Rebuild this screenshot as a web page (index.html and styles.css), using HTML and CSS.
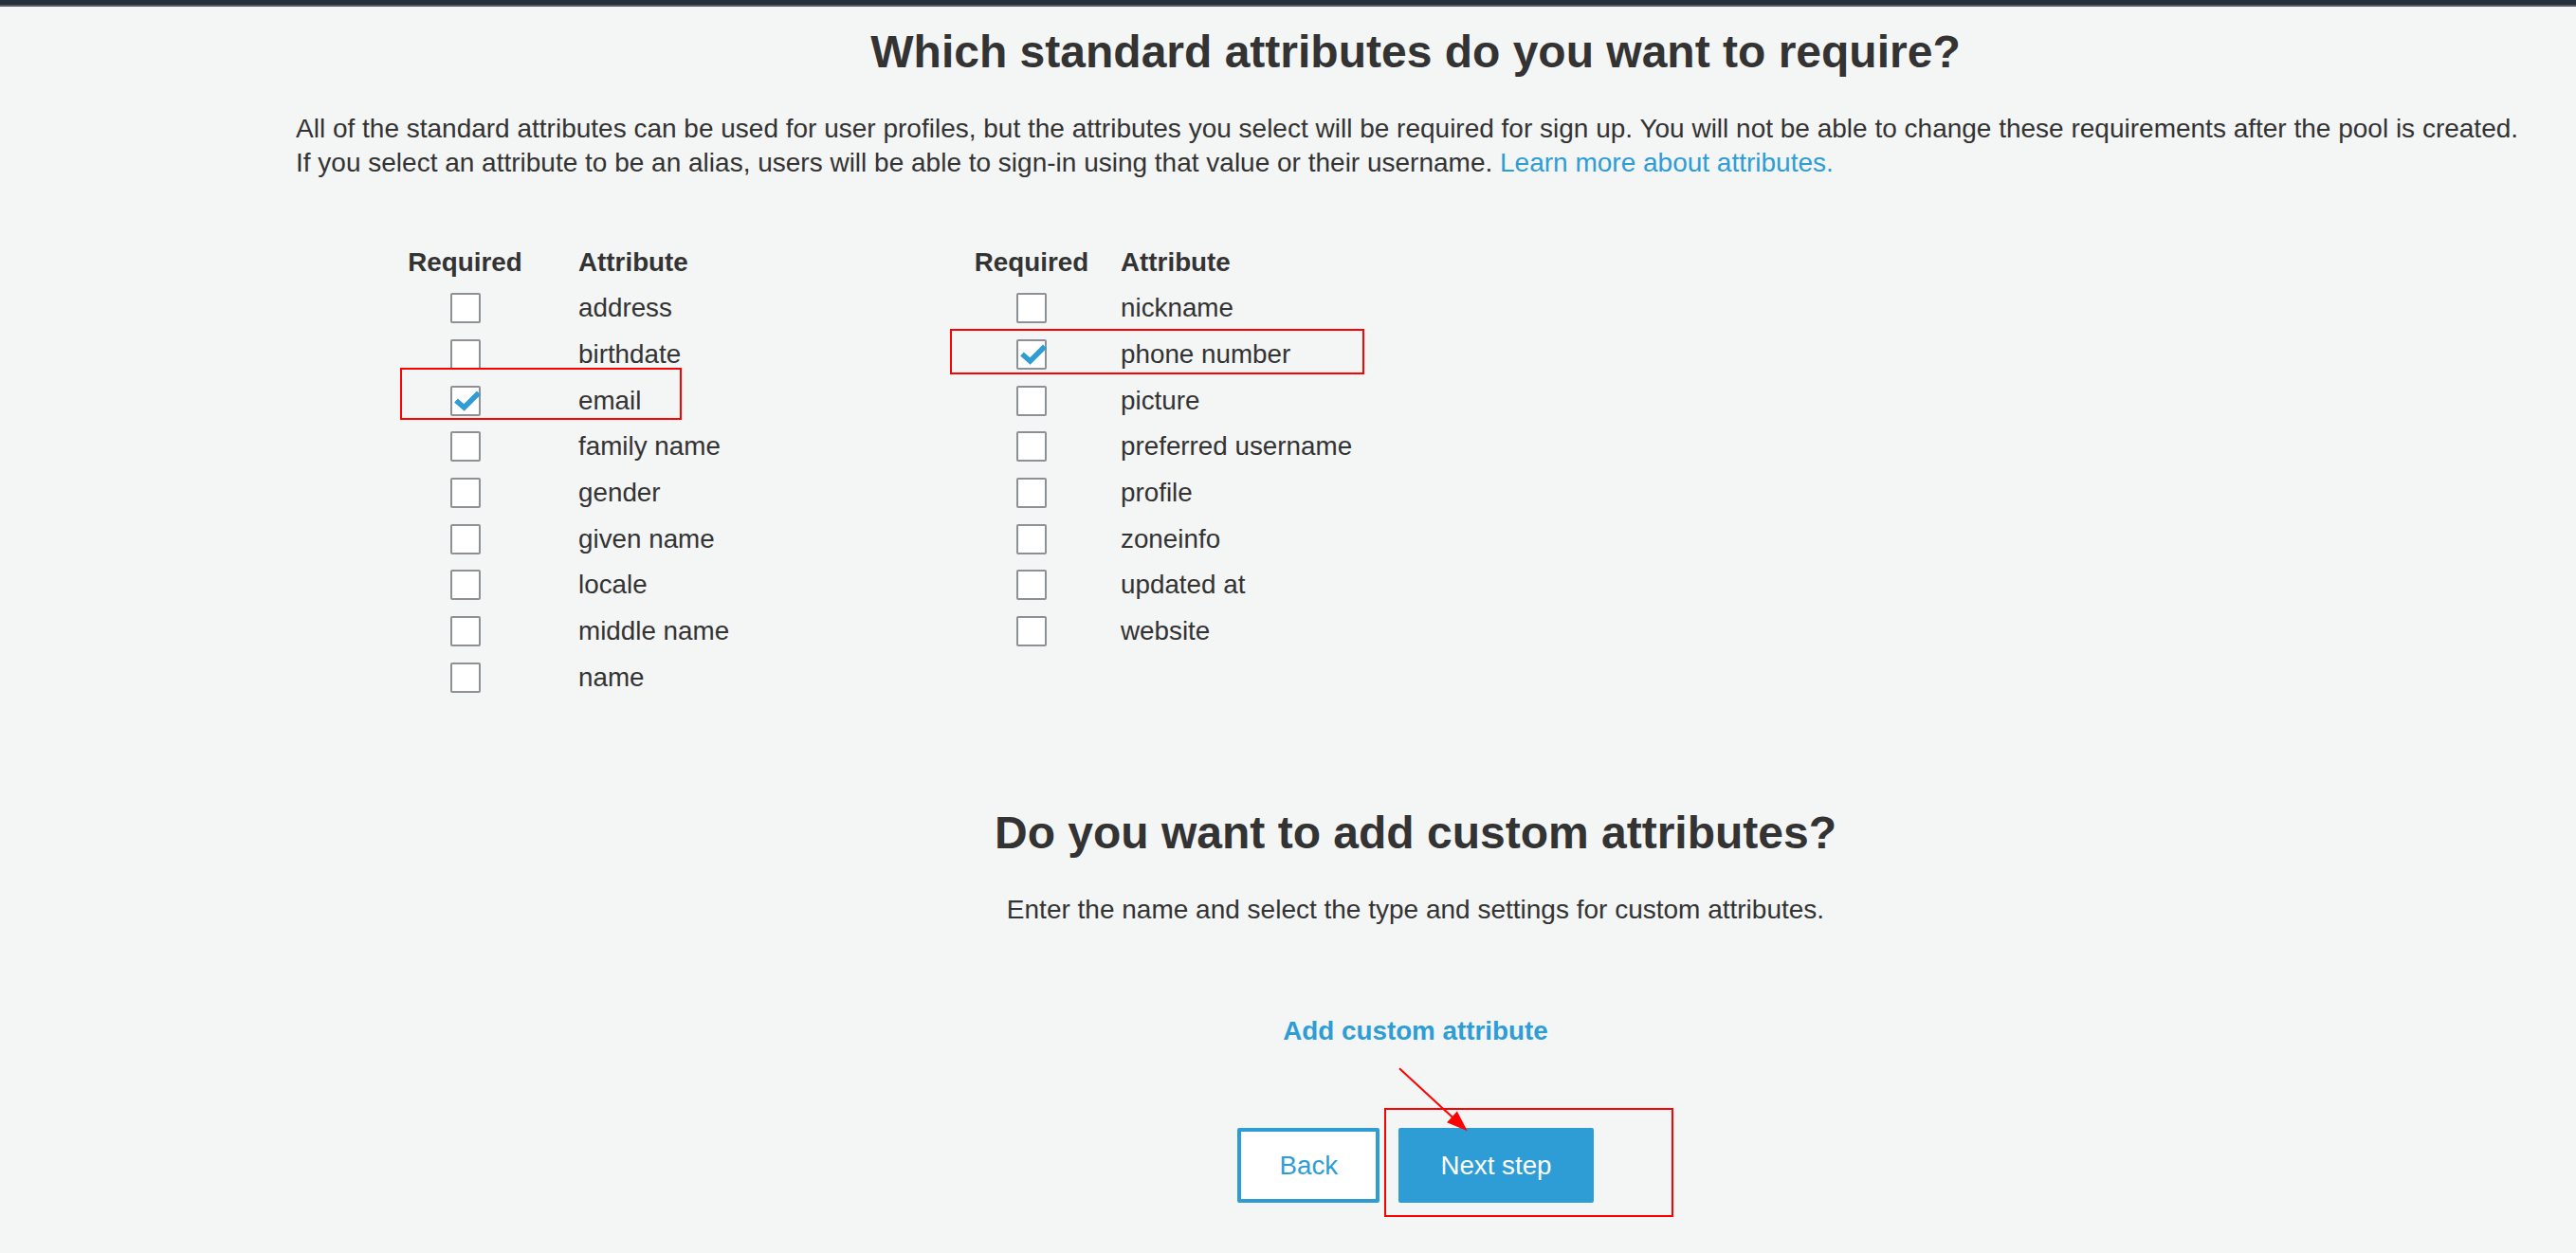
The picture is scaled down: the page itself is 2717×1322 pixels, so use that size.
FILE: index.html
```html
<!DOCTYPE html>
<html lang="en">
<head>
<meta charset="utf-8">
<title>Attributes</title>
<link rel="stylesheet" href="styles.css">
</head>
<body>
<div class="topbar"></div>
<main class="wizard">
  <section class="standard">
    <h1 class="title">Which standard attributes do you want to require?</h1>
    <p class="intro">All of the standard attributes can be used for user profiles, but the attributes you select will be required for sign up. You will not be able to change these requirements after the pool is created.<br>If you select an attribute to be an alias, users will be able to sign-in using that value or their username. <a class="link" href="#">Learn more about attributes.</a></p>
    <div class="tables">
      <div class="attr-table left">
        <div class="th req">Required</div><div class="th">Attribute</div>
        <div class="cb-cell"><span class="cb"></span></div><div class="name">address</div>
        <div class="cb-cell"><span class="cb"></span></div><div class="name">birthdate</div>
        <div class="cb-cell"><span class="cb checked"><svg viewBox="0 0 32 32"><polyline points="6,15.5 14.5,23 30,7.5"/></svg></span></div><div class="name">email</div>
        <div class="cb-cell"><span class="cb"></span></div><div class="name">family name</div>
        <div class="cb-cell"><span class="cb"></span></div><div class="name">gender</div>
        <div class="cb-cell"><span class="cb"></span></div><div class="name">given name</div>
        <div class="cb-cell"><span class="cb"></span></div><div class="name">locale</div>
        <div class="cb-cell"><span class="cb"></span></div><div class="name">middle name</div>
        <div class="cb-cell"><span class="cb"></span></div><div class="name">name</div>
      </div>
      <div class="attr-table right">
        <div class="th req">Required</div><div class="th">Attribute</div>
        <div class="cb-cell"><span class="cb"></span></div><div class="name">nickname</div>
        <div class="cb-cell"><span class="cb checked"><svg viewBox="0 0 32 32"><polyline points="6,15.5 14.5,23 30,7.5"/></svg></span></div><div class="name">phone number</div>
        <div class="cb-cell"><span class="cb"></span></div><div class="name">picture</div>
        <div class="cb-cell"><span class="cb"></span></div><div class="name">preferred username</div>
        <div class="cb-cell"><span class="cb"></span></div><div class="name">profile</div>
        <div class="cb-cell"><span class="cb"></span></div><div class="name">zoneinfo</div>
        <div class="cb-cell"><span class="cb"></span></div><div class="name">updated at</div>
        <div class="cb-cell"><span class="cb"></span></div><div class="name">website</div>
      </div>
    </div>
  </section>
  <section class="custom">
    <h2 class="title second">Do you want to add custom attributes?</h2>
    <p class="intro centered">Enter the name and select the type and settings for custom attributes.</p>
    <a class="add-link" href="#">Add custom attribute</a>
    <div class="actions">
      <button class="btn back" type="button">Back</button>
      <button class="btn next" type="button">Next step</button>
    </div>
  </section>
</main>
<div class="mark mark-email"></div>
<div class="mark mark-phone"></div>
<div class="mark mark-next"></div>
<svg class="arrow" viewBox="0 0 90 80" width="90" height="80"><line x1="6" y1="7.3" x2="62" y2="58.8"/><polygon points="77.7,73.3 56.1,64.3 66.9,52.5"/></svg>
</body>
</html>
```
FILE: styles.css
```css
html, body {
  margin: 0;
  padding: 0;
}
body {
  background: #f4f5f5;
  color: #333333;
  font-family: "Liberation Sans", Arial, sans-serif;
  font-size: 27.8px;
  min-height: 1322px;
  position: relative;
}
.topbar {
  height: 5px;
  background: #232f3e;
  border-bottom: 2px solid #545b64;
}
.wizard {
  padding: 0 43px 0 312px;
}
.title {
  margin: 20px 0 0;
  font-size: 48px;
  line-height: 56px;
  font-weight: bold;
  text-align: center;
  color: #333333;
}
.title.second {
  margin-top: 112px;
}
.intro {
  margin: 35px 0 0;
  font-size: 28px;
  line-height: 36.4px;
}
.intro.centered {
  margin-top: 35px;
  text-align: center;
}
.link {
  color: #2e9dd6;
  text-decoration: none;
}
.tables {
  display: flex;
  margin-top: 61.5px;
  padding-left: 118px;
}
.attr-table {
  display: grid;
  grid-auto-rows: 48.7px;
  align-items: center;
}
.attr-table.left {
  grid-template-columns: 121px auto;
  column-gap: 59px;
  width: 597.5px;
}
.attr-table.right {
  grid-template-columns: 121px auto;
  column-gap: 33.5px;
}
.th {
  font-weight: bold;
  white-space: nowrap;
}
.th.req {
  text-align: center;
}
.cb-cell {
  display: flex;
  justify-content: center;
  align-items: center;
}
.cb {
  box-sizing: border-box;
  width: 32px;
  height: 32px;
  border: 2px solid #8c9196;
  border-radius: 2px;
  background: #ffffff;
  position: relative;
  display: block;
}
.cb svg {
  position: absolute;
  left: -2px;
  top: -2px;
  width: 32px;
  height: 32px;
  overflow: visible;
}
.cb svg polyline {
  fill: none;
  stroke: #2e9dd6;
  stroke-width: 5.6;
  stroke-linejoin: miter;
}
.name {
  white-space: nowrap;
}
.custom {
  display: flex;
  flex-direction: column;
  align-items: center;
}
.custom .title, .custom .intro {
  align-self: stretch;
}
.add-link {
  margin-top: 90px;
  font-weight: bold;
  line-height: 38.8px;
  color: #2e9dd6;
  text-decoration: none;
}
.actions {
  margin-top: 82.5px;
  display: flex;
  gap: 20.3px;
}
.btn {
  box-sizing: border-box;
  height: 79.4px;
  padding: 0 40px;
  border: 4px solid #2e9dd6;
  border-radius: 2px;
  font-family: "Liberation Sans", Arial, sans-serif;
  font-size: 27.72px;
  line-height: 71.4px;
  cursor: pointer;
}
.btn.back {
  background: #ffffff;
  color: #2e9dd6;
}
.btn.next {
  background: #2e9dd6;
  color: #ffffff;
}
.mark {
  position: absolute;
  box-sizing: border-box;
  border: 2px solid #ff0000;
}
.mark-email {
  left: 422px;
  top: 388px;
  width: 297px;
  height: 55px;
}
.mark-phone {
  left: 1002px;
  top: 347px;
  width: 437px;
  height: 48px;
}
.mark-next {
  left: 1460px;
  top: 1169px;
  width: 305px;
  height: 115px;
}
.arrow {
  position: absolute;
  left: 1470px;
  top: 1120px;
}
.arrow line {
  stroke: #ff0000;
  stroke-width: 2;
}
.arrow polygon {
  fill: #ff0000;
}
```
